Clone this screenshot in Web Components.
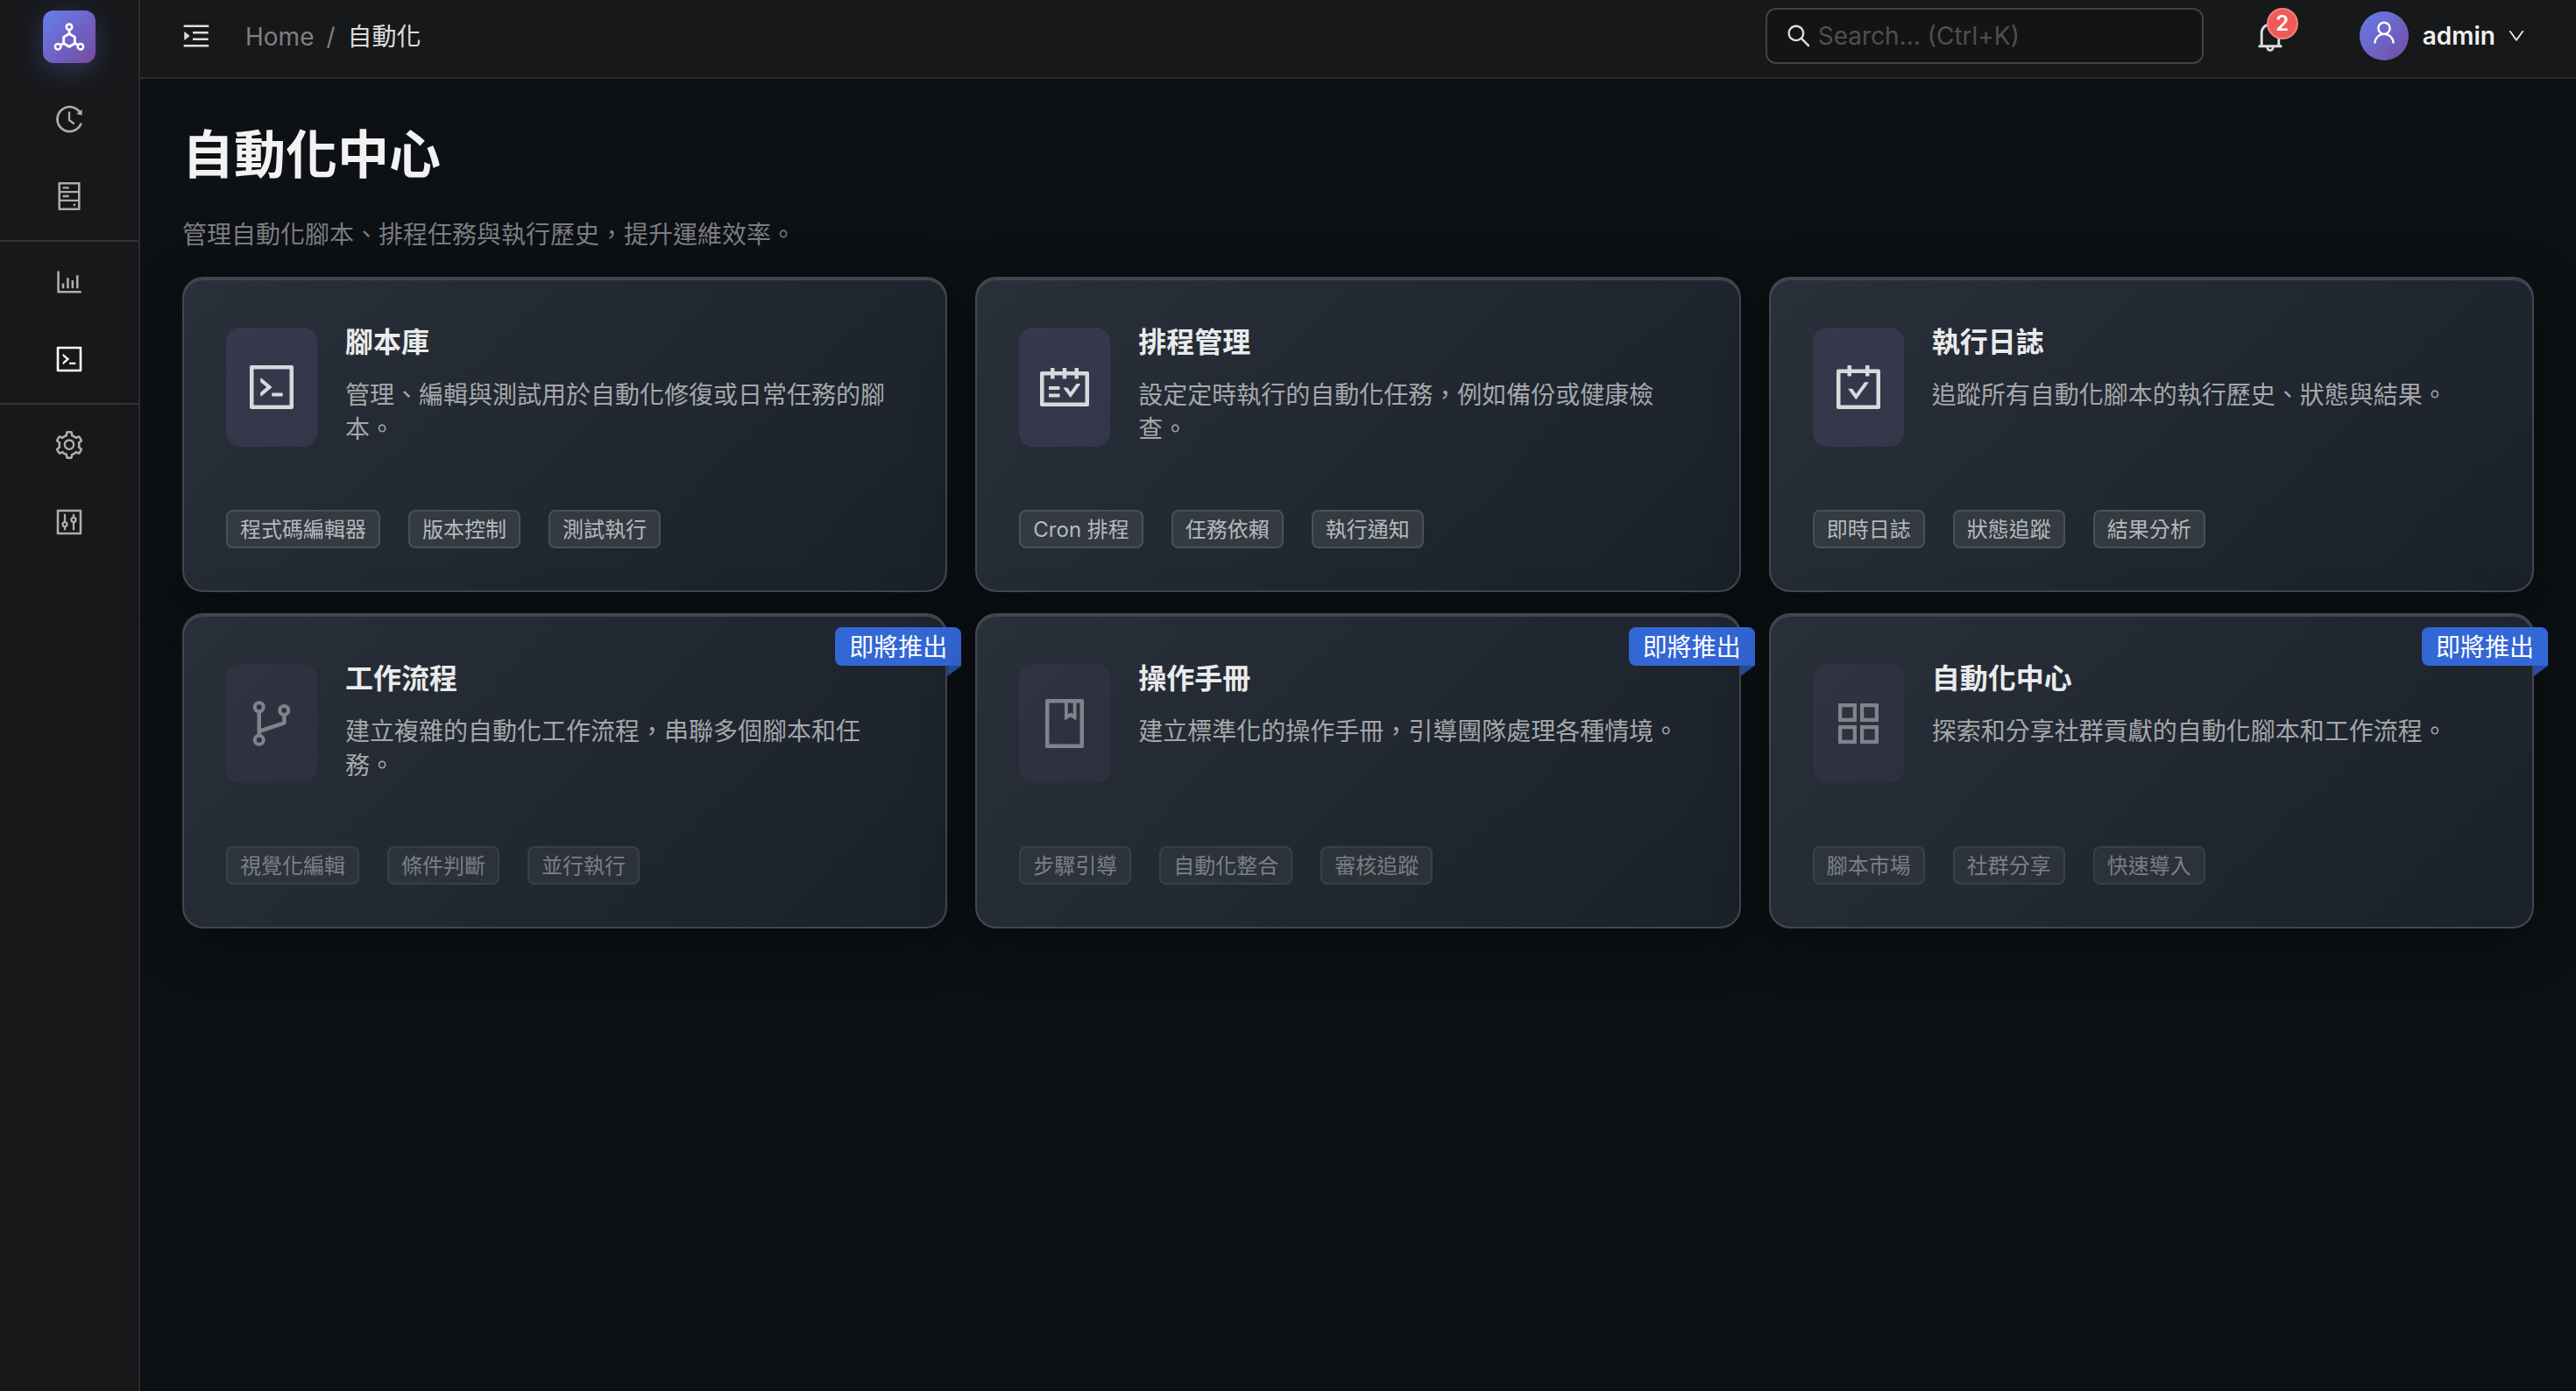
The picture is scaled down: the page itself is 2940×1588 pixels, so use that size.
<!DOCTYPE html>
<html lang="zh-Hant">
<head>
<meta charset="utf-8">
<title>自動化中心</title>
<style>
  html, body { margin: 0; min-height: 100%; background: #0d1014; }
  body {
    font-family: Inter, "Noto Sans CJK TC", sans-serif;
    font-size: 28px;
    line-height: 44px;
    color: #f2f2f2;
  }
</style>
</head>
<body>
<app-shell>
  <app-sidebar slot="sidebar"></app-sidebar>
  <app-header slot="header" user="admin" notifications="2"></app-header>
  <page-heading>
    自動化中心
    <span slot="description">管理自動化腳本、排程任務與執行歷史，提升運維效率。</span>
  </page-heading>
  <card-grid>
    <feature-card icon="code" tags="程式碼編輯器,版本控制,測試執行">
      <span slot="title">腳本庫</span>管理、編輯與測試用於自動化修復或日常任務的腳本。
    </feature-card>
    <feature-card icon="schedule" tags="Cron 排程,任務依賴,執行通知">
      <span slot="title">排程管理</span>設定定時執行的自動化任務，例如備份或健康檢查。
    </feature-card>
    <feature-card icon="carryout" tags="即時日誌,狀態追蹤,結果分析">
      <span slot="title">執行日誌</span>追蹤所有自動化腳本的執行歷史、狀態與結果。
    </feature-card>
    <feature-card icon="branches" ribbon="即將推出" tags="視覺化編輯,條件判斷,並行執行">
      <span slot="title">工作流程</span>建立複雜的自動化工作流程，串聯多個腳本和任務。
    </feature-card>
    <feature-card icon="book" ribbon="即將推出" tags="步驟引導,自動化整合,審核追蹤">
      <span slot="title">操作手冊</span>建立標準化的操作手冊，引導團隊處理各種情境。
    </feature-card>
    <feature-card icon="appstore" ribbon="即將推出" tags="腳本市場,社群分享,快速導入">
      <span slot="title">自動化中心</span>探索和分享社群貢獻的自動化腳本和工作流程。
    </feature-card>
  </card-grid>
</app-shell>

<script>
const ICONS = {
  logo: '<path d="M888.3 693.2c-42.5-24.6-94.3-18-129.2 12.8l-53-30.7V523.6c0-15.7-8.4-30.3-22-38.1l-136-78.3v-67.1c44.2-15 76-56.8 76-106.1 0-61.9-50.1-112-112-112s-112 50.1-112 112c0 49.3 31.8 91.1 76 106.1v67.1l-136 78.3c-13.6 7.8-22 22.4-22 38.1v151.6l-53 30.7c-34.9-30.8-86.8-37.4-129.2-12.8-53.5 31-71.7 99.4-41 152.9 30.8 53.5 98.9 71.9 152.2 41 42.5-24.6 62.7-73 53.6-118.8l48.7-28.3 140.6 81c6.8 3.9 14.4 5.9 22 5.9s15.2-2 22-5.9L674.5 740l48.7 28.3c-9.1 45.7 11.2 94.2 53.6 118.8 53.3 30.9 121.5 12.6 152.2-41 30.8-53.6 12.6-122-40.7-152.9zm-673 138.4a47.6 47.6 0 01-65.2-17.6c-13.2-22.9-5.4-52.3 17.5-65.5a47.6 47.6 0 0165.2 17.6c13.2 22.9 5.4 52.3-17.5 65.5zM464 234a48.01 48.01 0 0196 0 48.01 48.01 0 01-96 0zm170 446.2l-122 70.3-122-70.3V539.8l122-70.3 122 70.3v140.4zm239.9 133.9c-13.2 22.9-42.4 30.8-65.2 17.6-22.8-13.2-30.7-42.6-17.5-65.5s42.4-30.8 65.2-17.6c22.9 13.2 30.7 42.5 17.5 65.5z"/>',
  history: '<path d="M536.1 273H488c-4.4 0-8 3.6-8 8v275.3c0 2.6 1.2 5 3.3 6.5l165.3 120.7c3.6 2.6 8.6 1.9 11.2-1.7l28.6-39c2.7-3.7 1.9-8.7-1.7-11.2L544.1 528.5V281c0-4.4-3.6-8-8-8zm219.8 75.2l156.8 38.3c5 1.2 9.9-2.6 9.9-7.7l.8-161.5c0-6.7-7.7-10.5-12.9-6.3L752.9 334.1a8 8 0 003 14.1zm167.7 301.1l-56.7-19.5a8 8 0 00-10.1 4.8c-1.9 5.1-3.9 10.1-6 15.1-17.8 42.1-43.3 80-75.9 112.5a353 353 0 01-112.5 75.9 352.18 352.18 0 01-137.7 27.8c-47.8 0-94.1-9.3-137.7-27.8a353 353 0 01-112.5-75.9c-32.5-32.5-58-70.4-75.9-112.5A353.44 353.44 0 01171 512.2c0-47.8 9.3-94.2 27.8-137.8 17.8-42.1 43.3-80 75.9-112.5a353 353 0 01112.5-75.9C430.6 167.3 477 158 524.8 158s94.1 9.3 137.7 27.8A353 353 0 01775 261.7c10.2 10.3 19.8 21 28.6 32.3l59.8-46.8C784.7 146.6 662.2 81.9 524.6 82 285 82.1 92.6 276.7 95 516.4 97.4 751.9 288.9 942 524.8 942c185.5 0 343.5-117.6 403.7-282.3 1.5-4.2-.7-8.9-4.9-10.4z"/>',
  hdd: '<path d="M832 64H192c-17.7 0-32 14.3-32 32v832c0 17.7 14.3 32 32 32h640c17.7 0 32-14.3 32-32V96c0-17.7-14.3-32-32-32zm-600 72h560v208H232V136zm560 480H232V408h560v208zm0 272H232V680h560v208zM496 208H312c-4.4 0-8 3.6-8 8v48c0 4.4 3.6 8 8 8h184c4.4 0 8-3.6 8-8v-48c0-4.4-3.6-8-8-8zM312 544h184c4.4 0 8-3.6 8-8v-48c0-4.4-3.6-8-8-8H312c-4.4 0-8 3.6-8 8v48c0 4.4 3.6 8 8 8zm328 244a40 40 0 1080 0 40 40 0 10-80 0z"/>',
  chart: '<path d="M888 792H200V168c0-4.4-3.6-8-8-8h-56c-4.4 0-8 3.6-8 8v688c0 4.4 3.6 8 8 8h752c4.4 0 8-3.6 8-8v-56c0-4.4-3.6-8-8-8zm-600-80h56c4.4 0 8-3.6 8-8V560c0-4.4-3.6-8-8-8h-56c-4.4 0-8 3.6-8 8v144c0 4.4 3.6 8 8 8zm152 0h56c4.4 0 8-3.6 8-8V384c0-4.4-3.6-8-8-8h-56c-4.4 0-8 3.6-8 8v320c0 4.4 3.6 8 8 8zm152 0h56c4.4 0 8-3.6 8-8V462c0-4.4-3.6-8-8-8h-56c-4.4 0-8 3.6-8 8v242c0 4.4 3.6 8 8 8zm152 0h56c4.4 0 8-3.6 8-8V304c0-4.4-3.6-8-8-8h-56c-4.4 0-8 3.6-8 8v400c0 4.4 3.6 8 8 8z"/>',
  code: '<path d="M516 673c0 4.4 3.4 8 7.5 8h185c4.1 0 7.5-3.6 7.5-8v-48c0-4.4-3.4-8-7.5-8h-185c-4.1 0-7.5 3.6-7.5 8v48zm-194.9 6.1l192-161c3.8-3.2 3.8-9.1 0-12.3l-192-160.9A7.95 7.95 0 00308 351v62.7c0 2.4 1 4.6 2.9 6.1L420.7 512l-109.8 92.2a8.1 8.1 0 00-2.9 6.1V673c0 6.8 7.9 10.5 13.1 6.1zM880 112H144c-17.7 0-32 14.3-32 32v736c0 17.7 14.3 32 32 32h736c17.7 0 32-14.3 32-32V144c0-17.7-14.3-32-32-32zm-40 728H184V184h656v656z"/>',
  setting: '<path d="M924.8 625.7l-65.5-56c3.1-19 4.7-38.4 4.7-57.8s-1.6-38.8-4.7-57.8l65.5-56a32.03 32.03 0 009.3-35.2l-.9-2.6a443.74 443.74 0 00-79.7-137.9l-1.8-2.1a32.12 32.12 0 00-35.1-9.5l-81.3 28.9c-30-24.6-63.5-44-99.7-57.6l-15.7-85a32.05 32.05 0 00-25.8-25.7l-2.7-.5c-52.1-9.4-106.9-9.4-159 0l-2.7.5a32.05 32.05 0 00-25.8 25.7l-15.8 85.4a351.86 351.86 0 00-99 57.4l-81.9-29.1a32 32 0 00-35.1 9.5l-1.8 2.1a446.02 446.02 0 00-79.7 137.9l-.9 2.6c-4.5 12.5-.8 26.5 9.3 35.2l66.3 56.6c-3.1 18.8-4.6 38-4.6 57.1 0 19.2 1.5 38.4 4.6 57.1L99 625.5a32.03 32.03 0 00-9.3 35.2l.9 2.6c18.1 50.4 44.9 96.9 79.7 137.9l1.8 2.1a32.12 32.12 0 0035.1 9.5l81.9-29.1c29.8 24.5 63.1 43.9 99 57.4l15.8 85.4a32.05 32.05 0 0025.8 25.7l2.7.5a449.4 449.4 0 00159 0l2.7-.5a32.05 32.05 0 0025.8-25.7l15.7-85a350 350 0 0099.7-57.6l81.3 28.9a32 32 0 0035.1-9.5l1.8-2.1c34.8-41.1 61.6-87.5 79.7-137.9l.9-2.6c4.5-12.3.8-26.3-9.3-35zM788.3 465.9c2.5 15.1 3.8 30.6 3.8 46.1s-1.3 31-3.8 46.1l-6.6 40.1 74.7 63.9a370.03 370.03 0 01-42.6 73.6L721 702.8l-31.4 25.8c-23.9 19.6-50.5 35-79.3 45.8l-38.1 14.3-17.9 97a377.5 377.5 0 01-85 0l-17.9-97.2-37.8-14.5c-28.5-10.8-55-26.2-78.7-45.7l-31.4-25.9-93.4 33.2c-17-22.9-31.2-47.6-42.6-73.6l75.5-64.5-6.5-40c-2.4-14.9-3.7-30.3-3.7-45.5 0-15.3 1.2-30.6 3.7-45.5l6.5-40-75.5-64.5c11.3-26.1 25.6-50.7 42.6-73.6l93.4 33.2 31.4-25.9c23.7-19.5 50.2-34.9 78.7-45.7l37.9-14.3 17.9-97.2c28.1-3.2 56.8-3.2 85 0l17.9 97 38.1 14.3c28.7 10.8 55.4 26.2 79.3 45.8l31.4 25.8 92.8-32.9c17 22.9 31.2 47.6 42.6 73.6L781.8 426l6.5 39.9zM512 326c-97.2 0-176 78.8-176 176s78.8 176 176 176 176-78.8 176-176-78.8-176-176-176zm79.2 255.2A111.6 111.6 0 01512 614c-29.9 0-58-11.7-79.2-32.8A111.6 111.6 0 01400 502c0-29.9 11.7-58 32.8-79.2C454 401.6 482.1 390 512 390c29.9 0 58 11.6 79.2 32.8A111.6 111.6 0 01624 502c0 29.9-11.7 58-32.8 79.2z"/>',
  control: '<path d="M880 112H144c-17.7 0-32 14.3-32 32v736c0 17.7 14.3 32 32 32h736c17.7 0 32-14.3 32-32V144c0-17.7-14.3-32-32-32zm-40 728H184V184h656v656z"/><path d="M372 256v252M372 660v108M652 256v108M652 516v252" fill="none" stroke="currentColor" stroke-width="64"/><circle cx="372" cy="584" r="70" fill="none" stroke="currentColor" stroke-width="66"/><circle cx="652" cy="440" r="70" fill="none" stroke="currentColor" stroke-width="66"/>',
  unfold: '<path d="M408 442h480c4.4 0 8-3.6 8-8v-56c0-4.4-3.6-8-8-8H408c-4.4 0-8 3.6-8 8v56c0 4.4 3.6 8 8 8zm-8 204c0 4.4 3.6 8 8 8h480c4.4 0 8-3.6 8-8v-56c0-4.4-3.6-8-8-8H408c-4.4 0-8 3.6-8 8v56zm504-486H120c-4.4 0-8 3.6-8 8v56c0 4.4 3.6 8 8 8h784c4.4 0 8-3.6 8-8v-56c0-4.4-3.6-8-8-8zm0 632H120c-4.4 0-8 3.6-8 8v56c0 4.4 3.6 8 8 8h784c4.4 0 8-3.6 8-8v-56c0-4.4-3.6-8-8-8zM142.4 642.1L298.7 519a8.84 8.84 0 000-13.9L142.4 381.9c-5.8-4.6-14.4-.5-14.4 6.9v246.3a8.9 8.9 0 0014.4 7z"/>',
  search: '<path d="M909.6 854.5L649.9 594.8C690.2 542.7 712 479 712 412c0-80.2-31.3-155.4-87.9-212.1-56.6-56.7-132-87.9-212.1-87.9s-155.5 31.3-212.1 87.9C143.2 256.5 112 331.8 112 412c0 80.1 31.3 155.5 87.9 212.1C256.5 680.8 331.8 712 412 712c67 0 130.6-21.8 182.7-62l259.7 259.6a8.2 8.2 0 0011.6 0l43.6-43.5a8.2 8.2 0 000-11.6zM570.4 570.4C528 612.7 471.8 636 412 636s-116-23.3-158.4-65.6C211.3 528 188 471.8 188 412s23.3-116.1 65.6-158.4C296 211.3 352.2 188 412 188s116.1 23.2 158.4 65.6S636 352.2 636 412s-23.3 116.1-65.6 158.4z"/>',
  bell: '<path d="M816 768h-24V428c0-141.1-104.3-257.7-240-277.1V112c0-22.1-17.9-40-40-40s-40 17.9-40 40v38.9c-135.7 19.4-240 136-240 277.1v340h-24c-17.7 0-32 14.3-32 32v32c0 4.4 3.6 8 8 8h216c0 61.8 50.2 112 112 112s112-50.2 112-112h216c4.4 0 8-3.6 8-8v-32c0-17.7-14.3-32-32-32zM512 888c-26.5 0-48-21.5-48-48h96c0 26.5-21.5 48-48 48zM304 768V428c0-55.6 21.6-107.8 60.9-147.1S456.4 220 512 220c55.6 0 107.8 21.6 147.1 60.9S720 372.4 720 428v340H304z"/>',
  user: '<path d="M858.5 763.6a374 374 0 00-80.6-119.5 375.63 375.63 0 00-119.5-80.6c-.4-.2-.8-.3-1.2-.5C719.5 518 760 444.7 760 362c0-137-111-248-248-248S264 225 264 362c0 82.7 40.5 156 102.8 201.1-.4.2-.8.3-1.2.5-44.8 18.9-85 46-119.5 80.6a375.63 375.63 0 00-80.6 119.5A371.7 371.7 0 00136 901.8a8 8 0 008 8.2h60c4.4 0 7.9-3.5 8-7.8 2-77.2 33-149.5 87.8-204.3 56.7-56.7 132-87.9 212.2-87.9s155.5 31.2 212.2 87.9C779 752.7 810 825 812 902.2c.1 4.4 3.6 7.8 8 7.8h60a8 8 0 008-8.2c-1-47.8-10.9-94.3-29.5-138.2zM512 534c-45.9 0-89.1-17.9-121.6-50.4S340 407.9 340 362c0-45.9 17.9-89.1 50.4-121.6S466.1 190 512 190s89.1 17.9 121.6 50.4S684 316.1 684 362c0 45.9-17.9 89.1-50.4 121.6S557.9 534 512 534z"/>',
  down: '<path d="M884 256h-75c-5.1 0-9.9 2.5-12.9 6.6L512 654.2 227.9 262.6c-3-4.1-7.8-6.6-12.9-6.6h-75c-6.5 0-10.3 7.4-6.5 12.7l352.6 486.1c12.8 17.6 39 17.6 51.7 0l352.6-486.1c3.9-5.3.1-12.7-6.4-12.7z"/>',
  schedule: '<path d="M928 224H768v-56c0-4.4-3.6-8-8-8h-56c-4.4 0-8 3.6-8 8v56H548v-56c0-4.4-3.6-8-8-8h-56c-4.4 0-8 3.6-8 8v56H328v-56c0-4.4-3.6-8-8-8h-56c-4.4 0-8 3.6-8 8v56H96c-17.7 0-32 14.3-32 32v576c0 17.7 14.3 32 32 32h832c17.7 0 32-14.3 32-32V256c0-17.7-14.3-32-32-32zm-40 568H136V296h120v56c0 4.4 3.6 8 8 8h56c4.4 0 8-3.6 8-8v-56h148v56c0 4.4 3.6 8 8 8h56c4.4 0 8-3.6 8-8v-56h148v56c0 4.4 3.6 8 8 8h56c4.4 0 8-3.6 8-8v-56h120v496zM416 496H232c-4.4 0-8 3.6-8 8v48c0 4.4 3.6 8 8 8h184c4.4 0 8-3.6 8-8v-48c0-4.4-3.6-8-8-8zm0 136H232c-4.4 0-8 3.6-8 8v48c0 4.4 3.6 8 8 8h184c4.4 0 8-3.6 8-8v-48c0-4.4-3.6-8-8-8zm308.2-177.4L620.6 598.3l-52.8-73.1c-3-4.2-7.8-6.6-12.9-6.6H500c-6.5 0-10.3 7.4-6.5 12.7l114.1 158.2a15.9 15.9 0 0025.8 0l165-228.7c3.8-5.3 0-12.7-6.5-12.7H737c-5-.1-9.8 2.4-12.8 6.5z"/>',
  carryout: '<path d="M880 184H712v-64c0-4.4-3.6-8-8-8h-56c-4.4 0-8 3.6-8 8v64H384v-64c0-4.4-3.6-8-8-8h-56c-4.4 0-8 3.6-8 8v64H144c-17.7 0-32 14.3-32 32v664c0 17.7 14.3 32 32 32h736c17.7 0 32-14.3 32-32V216c0-17.7-14.3-32-32-32zm-40 656H184V256h128v48c0 4.4 3.6 8 8 8h56c4.4 0 8-3.6 8-8v-48h256v48c0 4.4 3.6 8 8 8h56c4.4 0 8-3.6 8-8v-48h128v584zM688 420h-55.2c-5.1 0-10 2.5-13 6.6L468.9 634.4l-64.7-89c-3-4.1-7.8-6.6-13-6.6H336c-6.5 0-10.3 7.4-6.5 12.7l126.5 174a16.1 16.1 0 0026 0l212.6-292.7c3.8-5.4 0-12.8-6.6-12.8z"/>',
  branches: '<path d="M740 161c-61.8 0-112 50.2-112 112 0 50.1 33.1 92.6 78.5 106.9v95.9L320 602.4V318.1c44.2-15 76-56.9 76-106.1 0-61.8-50.2-112-112-112s-112 50.2-112 112c0 49.2 31.8 91 76 106.1V706c-44.2 15-76 56.9-76 106.1 0 61.8 50.2 112 112 112s112-50.2 112-112c0-49.2-31.8-91-76-106.1v-27.8l423.5-138.7a50.52 50.52 0 0034.9-48.2V378.2c42.9-15.8 73.6-57 73.6-105.2 0-61.8-50.2-112-112-112zm-504 51a48.01 48.01 0 0196 0 48.01 48.01 0 01-96 0zm96 600a48.01 48.01 0 01-96 0 48.01 48.01 0 0196 0zm408-491a48.01 48.01 0 010-96 48.01 48.01 0 010 96z"/>',
  book: '<path d="M832 64H192c-17.7 0-32 14.3-32 32v832c0 17.7 14.3 32 32 32h640c17.7 0 32-14.3 32-32V96c0-17.7-14.3-32-32-32zm-260 72h96v209.9L621.5 312 572 347.4V136zm220 752H232V136h280v296.9c0 3.3 1 6.6 3 9.3a15.9 15.9 0 0022.3 3.7l83.8-59.9 81.4 59.4c2.7 2 6 3.1 9.4 3.1 8.8 0 16-7.2 16-16V136h64v752z"/>',
  appstore: '<path d="M464 144H160c-8.8 0-16 7.2-16 16v304c0 8.8 7.2 16 16 16h304c8.8 0 16-7.2 16-16V160c0-8.8-7.2-16-16-16zm-52 268H212V212h200v200zm452-268H560c-8.8 0-16 7.2-16 16v304c0 8.8 7.2 16 16 16h304c8.8 0 16-7.2 16-16V160c0-8.8-7.2-16-16-16zm-52 268H612V212h200v200zM464 544H160c-8.8 0-16 7.2-16 16v304c0 8.8 7.2 16 16 16h304c8.8 0 16-7.2 16-16V560c0-8.8-7.2-16-16-16zm-52 268H212V612h200v200zm452-268H560c-8.8 0-16 7.2-16 16v304c0 8.8 7.2 16 16 16h304c8.8 0 16-7.2 16-16V560c0-8.8-7.2-16-16-16zm-52 268H612V612h200v200z"/>'
};

class BaseElement extends HTMLElement {
  connectedCallback() {
    if (this.shadowRoot) return;
    const root = this.attachShadow({ mode: 'open' });
    root.innerHTML = `<style>*{box-sizing:border-box}</style>` + this.render();
  }
}

class UiIcon extends BaseElement {
  render() {
    return `<style>
      :host { display: inline-flex; flex: none; width: var(--icon-size, 32px); height: var(--icon-size, 32px); }
      svg { display: block; width: 100%; height: 100%; }
    </style>
    <svg viewBox="64 64 896 896" fill="currentColor" fill-rule="evenodd" aria-hidden="true">${ICONS[this.getAttribute('name')]}</svg>`;
  }
}
customElements.define('ui-icon', UiIcon);

class AppShell extends BaseElement {
  render() {
    return `<style>
      :host { display: flex; min-height: 100vh; }
      .body { flex: 1; min-width: 0; display: flex; flex-direction: column; }
      main { flex: 1; padding: 48px; }
    </style>
    <slot name="sidebar"></slot>
    <div class="body"><slot name="header"></slot><main><slot></slot></main></div>`;
  }
}
customElements.define('app-shell', AppShell);

class AppSidebar extends BaseElement {
  render() {
    const link = (icon, label, active) =>
      `<a href="#${icon}" aria-label="${label}"${active ? ' aria-current="page"' : ''}><ui-icon name="${icon}"></ui-icon></a>`;
    return `<style>
      :host { display: flex; flex-direction: column; flex: none; width: 160px; box-sizing: border-box;
        background: #17181a; border-right: 2px solid #2b2c2e; }
      .logo { --icon-size: 36px; display: flex; align-items: center; justify-content: center; align-self: center;
        width: 60px; height: 60px; margin: 12px 0 20px; border-radius: 12px; color: #fff;
        background: linear-gradient(135deg, #667eea, #764ba2); box-shadow: 0 8px 32px rgba(102,126,234,.3); }
      nav { display: flex; flex-direction: column; }
      a { display: flex; align-items: center; justify-content: center; height: 80px; margin: 4px 8px; color: #adadae; }
      a[aria-current] { color: #fff; }
      hr { width: 100%; height: 2px; margin: 6px 0 2px; border: 0; background: #313234; }
    </style>
    <div class="logo"><ui-icon name="logo"></ui-icon></div>
    <nav>
      ${link('history', '總覽')}${link('hdd', '資源')}<hr>
      ${link('chart', '分析')}${link('code', '自動化', true)}<hr>
      ${link('setting', '設定')}${link('control', '系統')}
    </nav>`;
  }
}
customElements.define('app-sidebar', AppSidebar);

class AppHeader extends BaseElement {
  render() {
    return `<style>
      :host { display: flex; align-items: center; flex: none; height: 90px; box-sizing: border-box;
        padding: 0 58px 6px 48px; background: #17181a; border-bottom: 2px solid #2b2c2e; }
      button { display: flex; align-items: center; padding: 0; border: 0; background: none; font: inherit; color: #dcdcdc; }
      ol { display: flex; gap: 14px; margin: 0 auto 0 40px; padding: 2px 0 0; list-style: none; color: #7f8081; }
      a { color: inherit; text-decoration: none; }
      li[aria-current] { color: #dedede; }
      .search { display: flex; align-items: center; gap: 8px; width: 500px; height: 64px; padding: 0 22px;
        border: 2px solid #424242; border-radius: 12px; background: #141414; color: #dcdcdc; --icon-size: 28px; }
      input { flex: 1; min-width: 0; padding: 0; border: 0; outline: 0; background: none; font: inherit; color: #dcdcdc; }
      input::placeholder { color: #4f4f4f; opacity: 1; }
      .bell { --icon-size: 36px; position: relative; margin: 0 84px 0 58px; }
      .badge { position: absolute; top: -14px; left: 14px; width: 36px; height: 36px; border: 2px solid #f0827c;
        border-radius: 18px; background: #ef5b56; color: #fff; font-size: 24px; line-height: 32px; font-weight: 600; text-align: center; }
      .user { gap: 14px; font-weight: 600; color: #f0f0f0; --icon-size: 20px; }
      .avatar { --icon-size: 28px; display: flex; align-items: center; justify-content: center; width: 56px; height: 56px;
        margin-right: 2px; padding-bottom: 8px; border-radius: 50%; color: #fff; background: linear-gradient(135deg, #667eea, #764ba2); }
    </style>
    <button aria-label="展開選單"><ui-icon name="unfold"></ui-icon></button>
    <ol><li><a href="#home">Home</a></li><li>/</li><li aria-current="page">自動化</li></ol>
    <label class="search"><ui-icon name="search"></ui-icon><input type="text" placeholder="Search... (Ctrl+K)" aria-label="Search"></label>
    <button class="bell" aria-label="通知"><ui-icon name="bell"></ui-icon><span class="badge">${this.getAttribute('notifications')}</span></button>
    <button class="user"><span class="avatar"><ui-icon name="user"></ui-icon></span><span>${this.getAttribute('user')}</span><ui-icon name="down"></ui-icon></button>`;
  }
}
customElements.define('app-header', AppHeader);

class PageHeading extends BaseElement {
  render() {
    return `<style>
      :host { display: block; margin-bottom: 26px; }
      h1 { margin: 0 0 30px; font-size: 59px; line-height: 78px; font-weight: 600; color: #f2f2f2; }
      p { margin: 0; color: #7b7d80; }
    </style>
    <h1><slot></slot></h1><p><slot name="description"></slot></p>`;
  }
}
customElements.define('page-heading', PageHeading);

class CardGrid extends BaseElement {
  render() {
    return `<style>
      :host { display: grid; grid-template-columns: repeat(3, minmax(0, 1fr)); gap: 24px 32px; }
    </style><slot></slot>`;
  }
}
customElements.define('card-grid', CardGrid);

class FeatureCard extends BaseElement {
  render() {
    const ribbon = this.getAttribute('ribbon');
    const tags = this.getAttribute('tags').split(',').map(t => `<li>${t}</li>`).join('');
    return `<style>
      :host { display: block; position: relative; }
      article { display: flex; flex-direction: column; justify-content: space-between; gap: 72px; height: 100%; padding: 48px;
        border: 2px solid #40474f; border-radius: 24px;
        background: linear-gradient(135deg, #2a3039, #222932 45%, #1a212a) padding-box, #40474f border-box;
        box-shadow: 0 16px 64px rgba(0,0,0,.3), inset 0 2px 0 #40474f; }
      .top { display: flex; align-items: flex-start; gap: 32px; }
      .icon { --icon-size: 56px; flex: none; display: flex; align-items: center; justify-content: center;
        width: 104px; height: 136px; margin-top: 8px; border-radius: 16px; background: rgba(112,100,160,.2); color: #d9d9dc; }
      h3 { margin: 0 0 16px; font-size: 32px; line-height: 50px; font-weight: 600; color: #eaebec; }
      p { margin: 0; line-height: 39px; color: #a5a7aa; }
      ul { display: flex; gap: 32px; margin: 0; padding: 0; list-style: none; }
      li { padding: 2px 14px 0; border: 2px solid #495058; border-radius: 8px; background: #333a42;
        font-size: 24px; line-height: 38px; color: #b7b9bb; }
      .soon .icon { opacity: .5; }
      .soon li { opacity: .6; }
      .ribbon { position: absolute; top: 16px; right: -16px; padding: 2px 16px 0; border-radius: 8px 8px 0 8px;
        background: #3367d6; color: #fff; line-height: 42px; }
      .ribbon::after { content: ""; position: absolute; top: 100%; right: 0; width: 16px; height: 12px;
        background: #264da1; clip-path: polygon(0 0, 100% 0, 0 100%); }
    </style>
    <article class="${ribbon ? 'soon' : ''}">
      <div class="top">
        <div class="icon"><ui-icon name="${this.getAttribute('icon')}"></ui-icon></div>
        <div><h3><slot name="title"></slot></h3><p><slot></slot></p></div>
      </div>
      <ul>${tags}</ul>
    </article>
    ${ribbon ? `<div class="ribbon">${ribbon}</div>` : ''}`;
  }
}
customElements.define('feature-card', FeatureCard);
</script>
</body>
</html>
